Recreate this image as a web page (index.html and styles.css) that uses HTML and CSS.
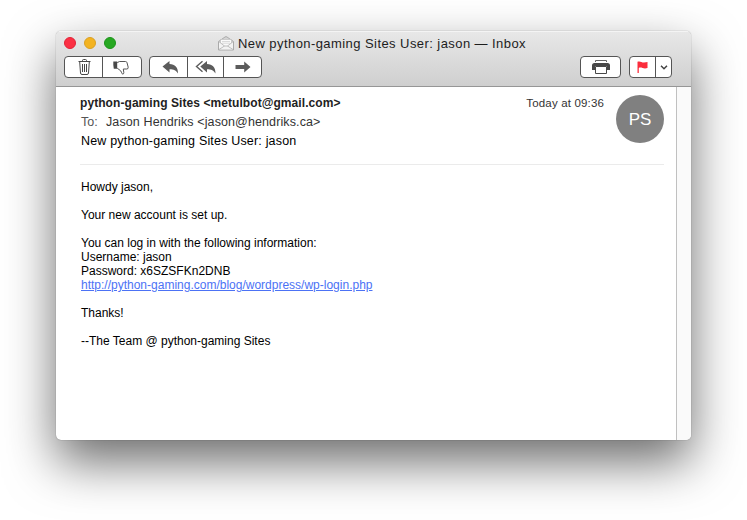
FILE: index.html
```html
<!DOCTYPE html>
<html lang="en">
<head>
<meta charset="utf-8">
<title>New python-gaming Sites User: jason</title>
<link rel="stylesheet" href="styles.css">
</head>
<body>
<main class="window">
  <header class="chrome">
    <div class="titlebar">
      <div class="lights"><i class="light close"></i><i class="light minimize"></i><i class="light zoom"></i></div>
      <svg class="envelope" width="16" height="15" viewBox="0 0 16 15">
        <path d="M.5 5.500 7 1Q8 .3 9 1l6.500 4.500V14H.5Z" fill="#d4d4d4" stroke="#aaa"/>
        <path d="M2.500 3.500h11V9L8 11 2.500 9Z" fill="#fafafa" stroke="#bbb" stroke-width=".6"/>
        <path d="M4 5.500h8M4 7.200h8" stroke="#ccc" stroke-width=".7"/>
        <path d="m1 5.500 5.500 4.500h3L15 5.500v8H1Z" fill="#f3f3f3"/>
        <path d="m1 5.700 5.500 4.300h3L15 5.700M1 13.500 6.500 10M15 13.500 9.500 10" fill="none" stroke="#b0b0b0" stroke-width=".8"/>
      </svg>
      <h1 class="title">New python-gaming Sites User: jason — Inbox</h1>
    </div>
    <div class="toolbar">
      <div class="group dispose">
        <button class="tool" aria-label="Delete"><svg width="13" height="16" viewBox="0 0 13 16" fill="none" stroke="#484848"><path d="M.5 2.500h12M4.500 2.500V1.500Q4.500.5 5.500.5h2q1 0 1 1v1M1.700 3l.8 11q.1 1.500 1.500 1.500h5q1.400 0 1.500-1.500l.8-11M4.500 5v8M6.500 5v8M8.500 5v8"/></svg></button>
        <button class="tool" aria-label="Junk"><svg width="16" height="15" viewBox="0 0 16 15" fill="none" stroke="#555"><path d="M.3 1.500h3.900v7.200H.8Q.1 5 .3 1.500Z" fill="#484848" stroke="none"/><path d="M4.200 2.600 6.500 1.500h6q1.200 0 1.500 1.200l1.200 4.500q.2 1.800-1.400 1.800h-3.500l.5 3.500q0 1.700-1 1.600-.8 0-1.100-1.300Q8 10.500 6 9.500L4.200 8.200"/></svg></button>
      </div>
      <div class="group respond">
        <button class="tool reply" aria-label="Reply"><svg width="17" height="14" viewBox="0 0 17 14"><path d="M7.500 1v3c5.500.2 8.500 3 8.500 9.500-2-3-4-4.300-8.500-4.300v3.300L.5 6.500Z" fill="#5c5c5c"/></svg></button>
        <button class="tool reply-all" aria-label="Reply all"><svg width="21" height="14" viewBox="0 0 21 14"><path d="M12 1v3c5.500.2 8.500 3 8.500 9.500-2-3-4-4.300-8.500-4.300v3.300L5.300 6.500Z" fill="#5c5c5c"/><path d="M7.500 1.300 1.500 6.500l6 5.200" fill="none" stroke="#5c5c5c" stroke-width="1.400"/></svg></button>
        <button class="tool forward" aria-label="Forward"><svg width="16" height="12" viewBox="0 0 16 12"><path d="M.5 4h8.700V.5l6.300 5.500-6.300 5.500V8H.5Z" fill="#5c5c5c"/></svg></button>
      </div>
      <div class="group print">
        <button class="tool" aria-label="Print"><svg width="18" height="14" viewBox="0 0 18 14"><path d="M3.500 2V.5h11V2" fill="none" stroke="#666"/><path d="M2.500 3h13Q18 3 18 5.500V10h-3V6H3v4H0V5.500Q0 3 2.500 3Z" fill="#484848"/><path d="M3.500 6.500h11v7h-11Z" fill="#fff" stroke="#484848"/></svg></button>
      </div>
      <div class="group flagging">
        <button class="tool" aria-label="Flag"><svg width="11" height="12" viewBox="0 0 11 12"><path d="M.5.800C3-.5 5 1.800 7 1.500q2-.2 3.500-.5v6c-2 .7-3.500.5-5 0-1.500-.6-3-.4-3.700 0V12H.5Z" fill="#fb2d3c"/></svg></button>
        <button class="tool" aria-label="Flag colors"><svg width="8" height="5" viewBox="0 0 8 5"><path d="m1 .8 3 3 3-3" fill="none" stroke="#444" stroke-width="1.500"/></svg></button>
      </div>
    </div>
  </header>
  <div class="pane">
    <article class="message">
      <header class="meta">
        <div class="people">
          <p class="from">python-gaming Sites &lt;metulbot@gmail.com&gt;</p>
          <p class="to"><span class="label">To:</span><span class="recipient">Jason Hendriks &lt;jason@hendriks.ca&gt;</span></p>
          <p class="subject">New python-gaming Sites User: jason</p>
        </div>
        <time class="date">Today at 09:36</time>
        <div class="avatar">PS</div>
      </header>
      <div class="body">
        <p>Howdy jason,</p>
        <p>Your new account is set up.</p>
        <p>You can log in with the following information:<br>Username: jason<br>Password: x6SZSFKn2DNB<br><a class="link" href="#">http://python-gaming.com/blog/wordpress/wp-login.php</a></p>
        <p>Thanks!</p>
        <p>--The Team @ python-gaming Sites</p>
      </div>
    </article>
    <div class="scroller"></div>
  </div>
</main>
</body>
</html>
```
FILE: styles.css
```css
* { box-sizing: border-box; }
body {
  margin: 0;
  height: 520px;
  padding: 31px 56px 80px;
  overflow: hidden;
  background: #fff;
  font-family: "Liberation Sans", Arial, sans-serif;
  color: #000;
}
h1, p { margin: 0; font-weight: normal; }
svg { display: block; flex: none; }
.window {
  display: flex;
  flex-direction: column;
  width: 635px;
  height: 409px;
  border-radius: 5px;
  overflow: hidden;
  background: #fff;
  box-shadow: 0 0 1px rgba(0,0,0,.55), 0 22px 50px rgba(0,0,0,.58);
}
.chrome {
  flex: none;
  height: 56px;
  border-bottom: 1px solid #969696;
  background: linear-gradient(#e8e8e8, #cfcfcf);
  box-shadow: inset 0 1px #f4f4f4;
}
.titlebar { display: flex; align-items: center; height: 25px; padding-left: 8px; }
.lights { display: flex; gap: 8px; width: 154px; }
.light { width: 12px; height: 12px; margin-top: -1px; border-radius: 50%; }
.close { background: #fb3044; border: 1px solid #e22337; }
.minimize { background: #f3b321; border: 1px solid #daa023; }
.zoom { background: #27a822; border: 1px solid #1c941a; }
.title { margin-left: 4px; font-size: 13px; line-height: 16px; letter-spacing: .43px; white-space: nowrap; color: #1d1d1d; }
.toolbar { display: flex; padding: 0 19px 0 8px; }
.group { display: flex; height: 22px; border: 1px solid #555; border-radius: 4px; background: #fff; overflow: hidden; }
.tool { display: flex; align-items: center; justify-content: center; flex: 1; padding: 0; border: 0; background: none; }
.tool + .tool { border-left: 1px solid #555; }
.dispose { width: 78px; margin-right: 7px; }
.dispose .tool:first-child { flex: 0 0 37px; padding-left: 2px; }
.dispose .tool:last-child { padding-right: 3px; }
.respond { width: 113px; }
.reply { flex: 0 0 37px; padding-left: 4px; }
.reply-all { flex: 0 0 36px; }
.print { width: 41px; margin-left: auto; margin-right: 8px; }
.flagging { width: 43px; }
.flagging .tool:last-child { flex: 0 0 16px; }
.pane { display: flex; flex: 1; }
.message { flex: 1; padding: 8px 12px 0 24px; }
.meta { display: flex; height: 70px; border-bottom: 1px solid #ebebeb; }
.people { flex: 1; font-size: 12.5px; white-space: nowrap; }
.people p { height: 19px; line-height: 17px; }
.from { font-size: 12px; font-weight: bold; color: #222; letter-spacing: .07px; }
.to { display: flex; color: #333; }
.label { width: 26px; padding-left: 1px; color: #555; }
.recipient { letter-spacing: .11px; }
.subject { padding-left: 1px; letter-spacing: .18px; }
.date { margin-right: 12px; font-size: 11.5px; line-height: 17px; letter-spacing: .16px; color: #333; white-space: nowrap; }
.avatar { width: 48px; height: 48px; border-radius: 50%; background: #808080; color: #fff; font-size: 17px; line-height: 49px; text-align: center; }
.body { padding: 15px 0 0 1px; font-size: 12px; line-height: 14px; }
.body p { margin-bottom: 14px; }
.link { color: #4c72f5; text-decoration: underline; }
.scroller { width: 15px; border-left: 1px solid #c0c0c0; background: #fafafa; }
```
